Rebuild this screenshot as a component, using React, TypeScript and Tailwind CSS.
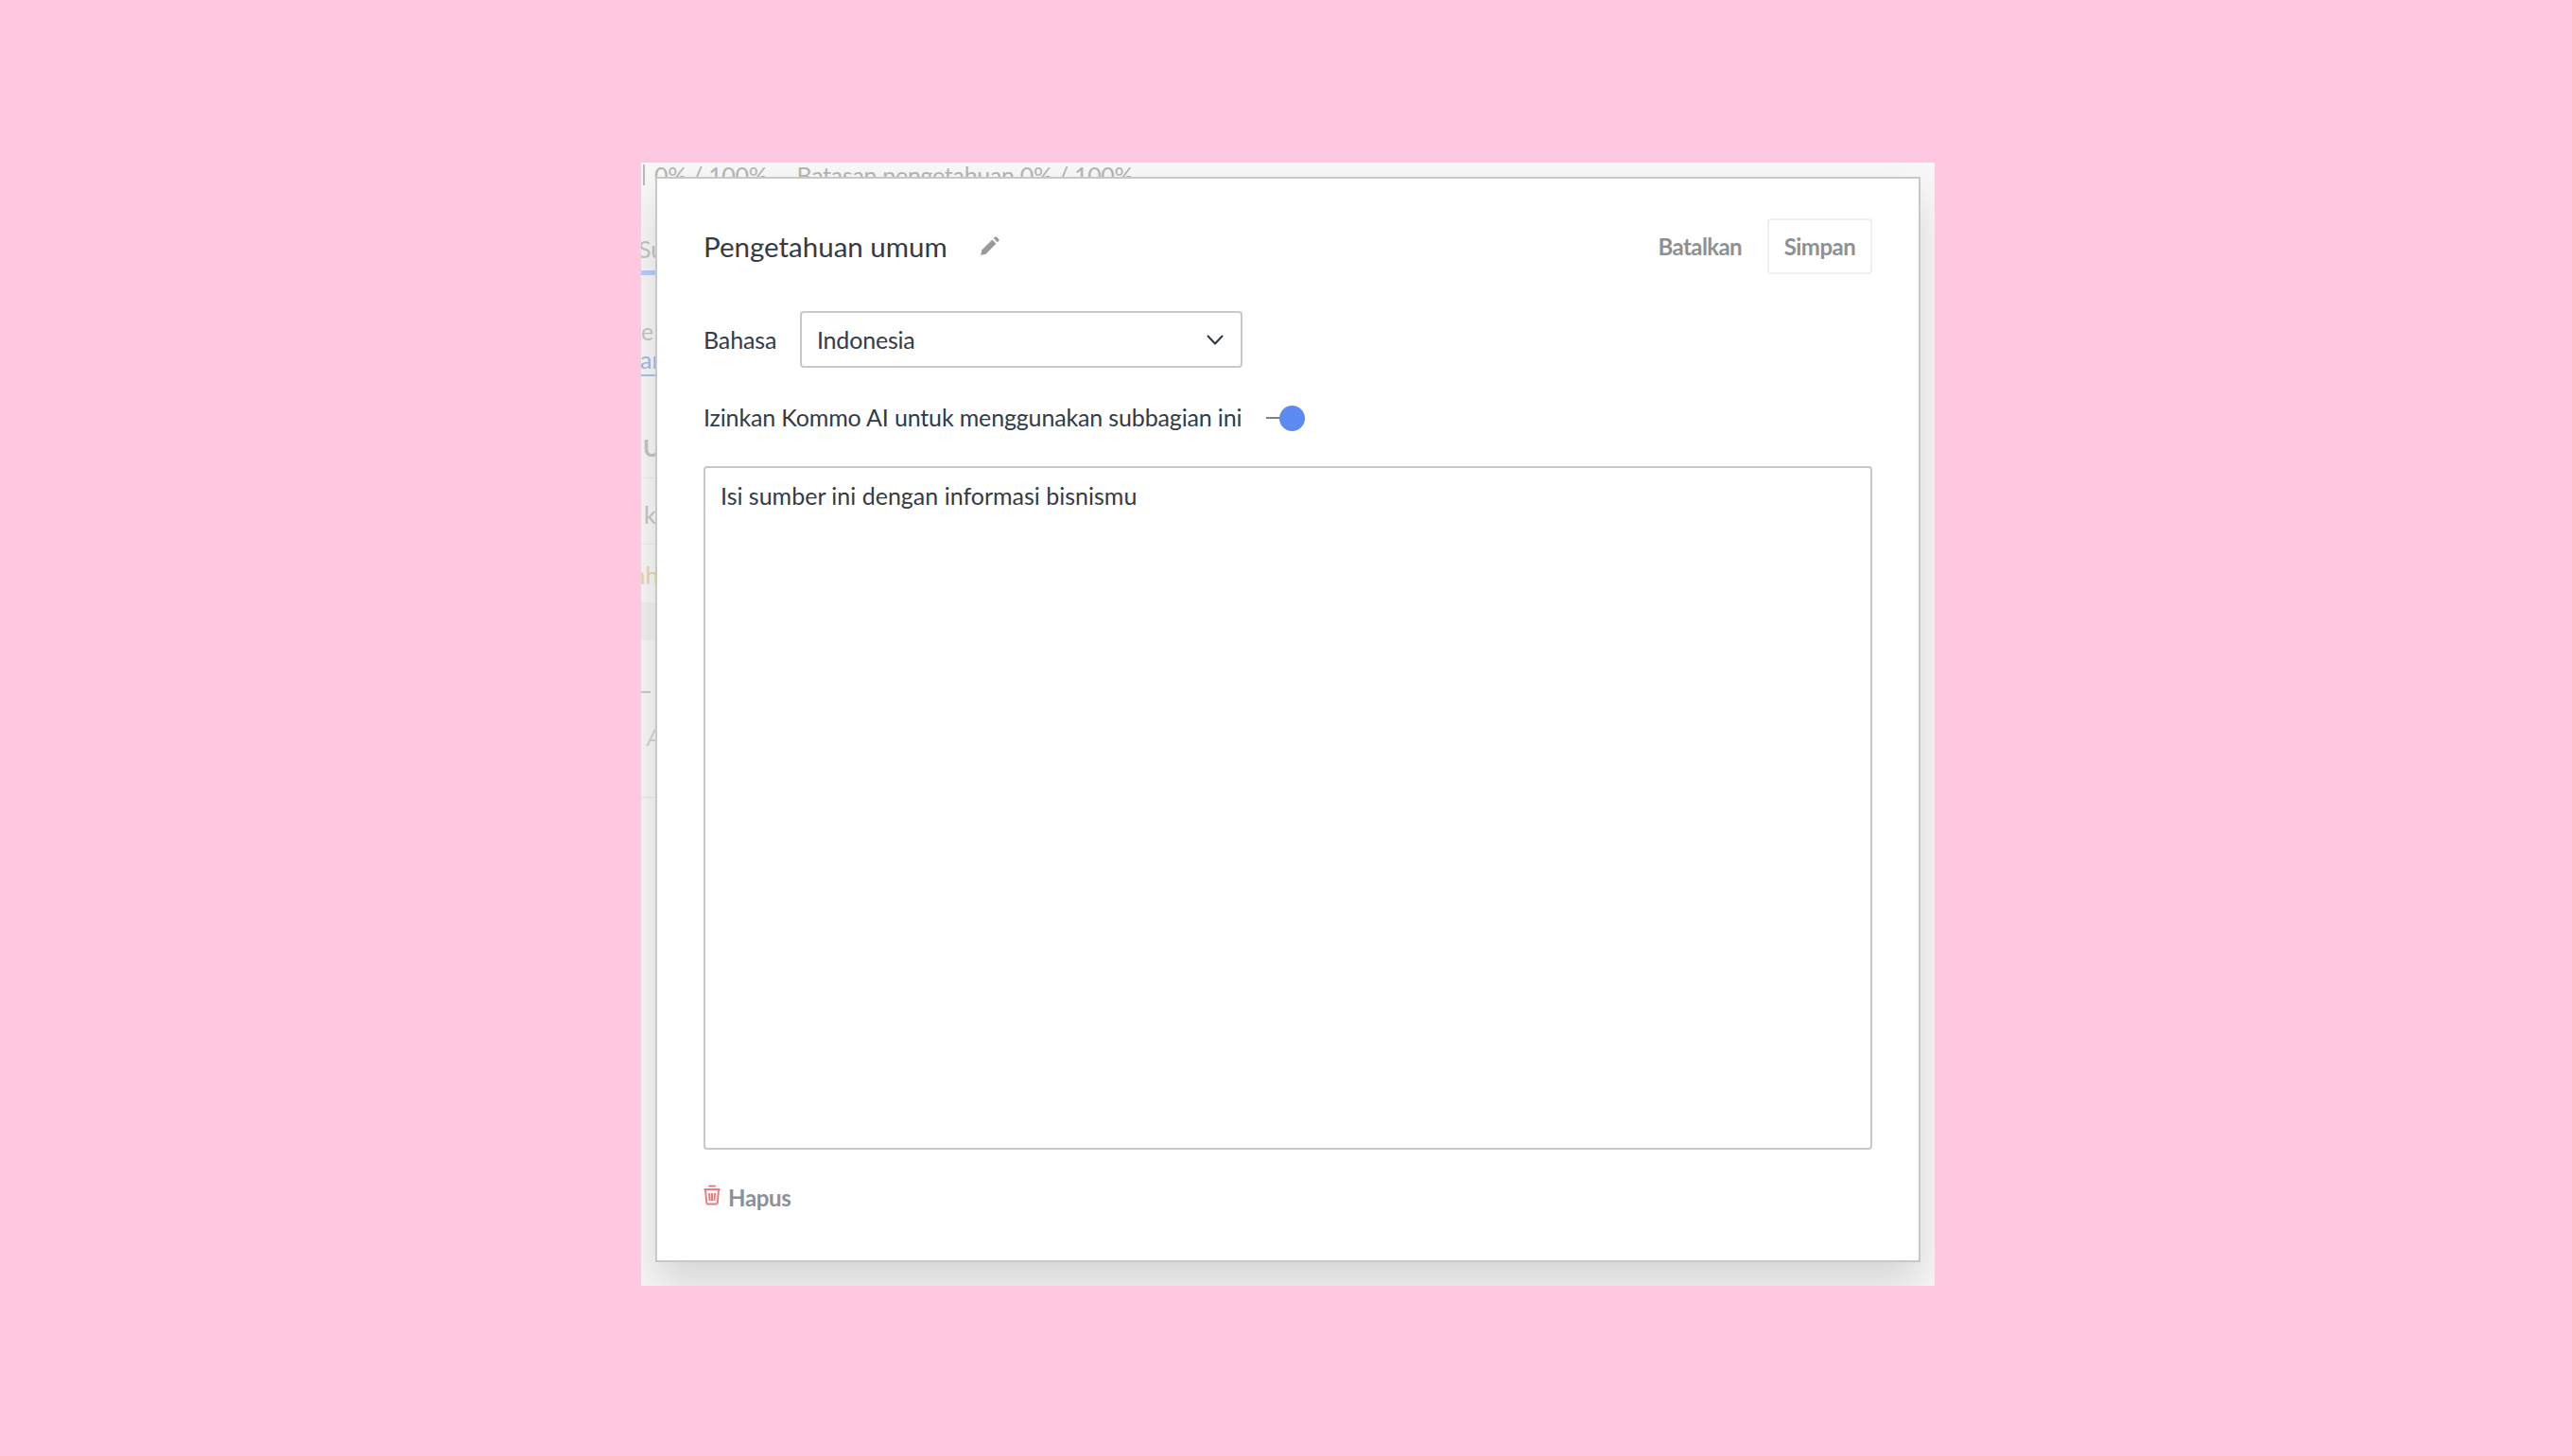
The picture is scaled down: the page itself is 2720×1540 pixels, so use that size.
function BackgroundStrip() {
  return (
    <div className="flex flex-col text-[25px] leading-[30px] text-[#c4c4c4] font-['Lato',sans-serif]">
      <div className="flex h-[30px] items-start whitespace-nowrap text-[#b4b4b4] tracking-[-0.3px]">
        <span className="ml-[2px] mr-[10px] mt-[2px] h-[22px] w-[2px] bg-[#b9b9b9]" />
        <span className="-mt-[2px]">0% / 100%</span>
        <span className="-mt-[2px] ml-[31px]">Batasan pengetahuan 0% / 100%</span>
      </div>
      <div className="mt-[46px] h-[43px] w-[20px] whitespace-nowrap border-b-[5px] border-[#b9cdf6] indent-[-3px]">Su</div>
      <div className="mt-[44px] -ml-[14px] h-[30px] whitespace-nowrap">ne</div>
      <div className="h-[33px] w-[20px] overflow-hidden border-b-2 border-[#a9bfee] text-[#a5b8e0] -ml-[1px]">ar</div>
      <div className="mt-[60px] h-[48px] w-[20px] border-b border-[#ececec] pl-[2px] font-bold">U</div>
      <div className="mt-[23px] h-[47px] w-[20px] border-b border-[#ececec] pl-[3px]">k</div>
      <div className="-ml-[8px] mt-[17px] h-[30px] whitespace-nowrap text-[#e8d5ae]">ah</div>
      <div className="mt-[14px] h-[40px] w-[20px] bg-[#f0f0f0]" />
      <div className="mt-[54px] h-[2px] w-[10px] bg-[#c9c9c9]" />
      <div className="mt-[31px] h-[30px] pl-[6px] italic text-[#d4d4d4]">A</div>
      <div className="mt-[49px] h-px w-[20px] bg-[#e6e6e6]" />
    </div>
  );
}

function PencilIcon() {
  return (
    <svg viewBox="0 0 20 20" className="h-[21px] w-[21px] fill-[#9a9a9a]">
      <path d="M1 19l1.2-5.2L12.6 3.4l4 4L6.2 17.8 1 19z" />
      <path d="M14 2l1.6-1.4c.5-.4 1.1-.4 1.5 0l2.3 2.3c.4.4.4 1 0 1.5L18 6 14 2z" />
    </svg>
  );
}

function TrashIcon() {
  return (
    <svg viewBox="0 0 18 22" className="h-[22px] w-[18px] fill-none stroke-[#e87b7b] stroke-2">
      <path d="M6 1.5h6" strokeLinecap="round" />
      <path d="M.5 5h17" />
      <path d="M2 5l1.2 14.2c.1.8.7 1.3 1.5 1.3h8.6c.8 0 1.4-.5 1.5-1.3L16 5" />
      <path d="M6 9l.6 8M9 9v8M12 9l-.6 8" />
    </svg>
  );
}

function SelectChevron() {
  return (
    <svg viewBox="0 0 18 11" className="h-[11px] w-[18px] fill-none stroke-[#2f3742] stroke-2">
      <path d="M1 1l8 8.5L17 1" />
    </svg>
  );
}

export default function App() {
  return (
    <div className="min-h-[1540px] bg-[#fec8e0] pl-[678px] pt-[172px] font-['Lato',sans-serif]">
      <div className="relative h-[1188px] w-[1368px] overflow-hidden bg-[#f7f7f7]">
        <BackgroundStrip />

        <div className="absolute left-[15px] top-[15px] flex h-[1148px] w-[1338px] flex-col border-2 border-[#c8c8c8] bg-white px-[49px] pt-[42px] text-[#333b47] shadow-[0_24px_40px_rgba(0,0,0,0.13)]">
          <div className="flex h-[59px] items-center">
            <span className="mt-[2px] text-[29.5px]">Pengetahuan umum</span>
            <span className="ml-[34px]">
              <PencilIcon />
            </span>
            <span className="ml-auto mt-[1px] text-[24px] font-bold tracking-[-0.6px] text-[#8c9195]">Batalkan</span>
            <button className="ml-[27px] h-[59px] w-[111px] rounded-[4px] border-2 border-[#f0f0f0] text-[24px] font-bold tracking-[-0.5px] text-[#8c9195]">
              Simpan
            </button>
          </div>

          <div className="mt-[39px] flex items-center text-[25px]">
            <span className="mt-[1px] w-[102px] tracking-[-0.1px]">Bahasa</span>
            <div className="flex h-[60px] w-[468px] items-center justify-between rounded-[4px] border-2 border-[#c8c8c8] pl-[16px] pr-[18px]">
              <span className="mt-[1px] tracking-[-0.2px]">Indonesia</span>
              <SelectChevron />
            </div>
          </div>

          <div className="mt-[38px] flex h-[30px] items-center text-[25px]">
            <span className="w-[569px] whitespace-nowrap tracking-[-0.15px]">Izinkan Kommo AI untuk menggunakan subbagian ini</span>
            <div className="ml-[26px] h-[2px] w-[14px] bg-[#7d8188]" />
            <div className="h-[27px] w-[27px] rounded-full bg-[#5b8af0]" />
          </div>

          <div className="mt-[36px] h-[723px] rounded-[4px] border-2 border-[#c8c8c8] px-[16px] pt-[13px] text-[25px] leading-[32px]">
            Isi sumber ini dengan informasi bisnismu
          </div>

          <div className="mt-[33px] flex items-center gap-[8px]">
            <span className="-mt-[6px]">
              <TrashIcon />
            </span>
            <span className="text-[24px] font-bold tracking-[-0.3px] text-[#8c9195]">Hapus</span>
          </div>
        </div>
      </div>
    </div>
  );
}
